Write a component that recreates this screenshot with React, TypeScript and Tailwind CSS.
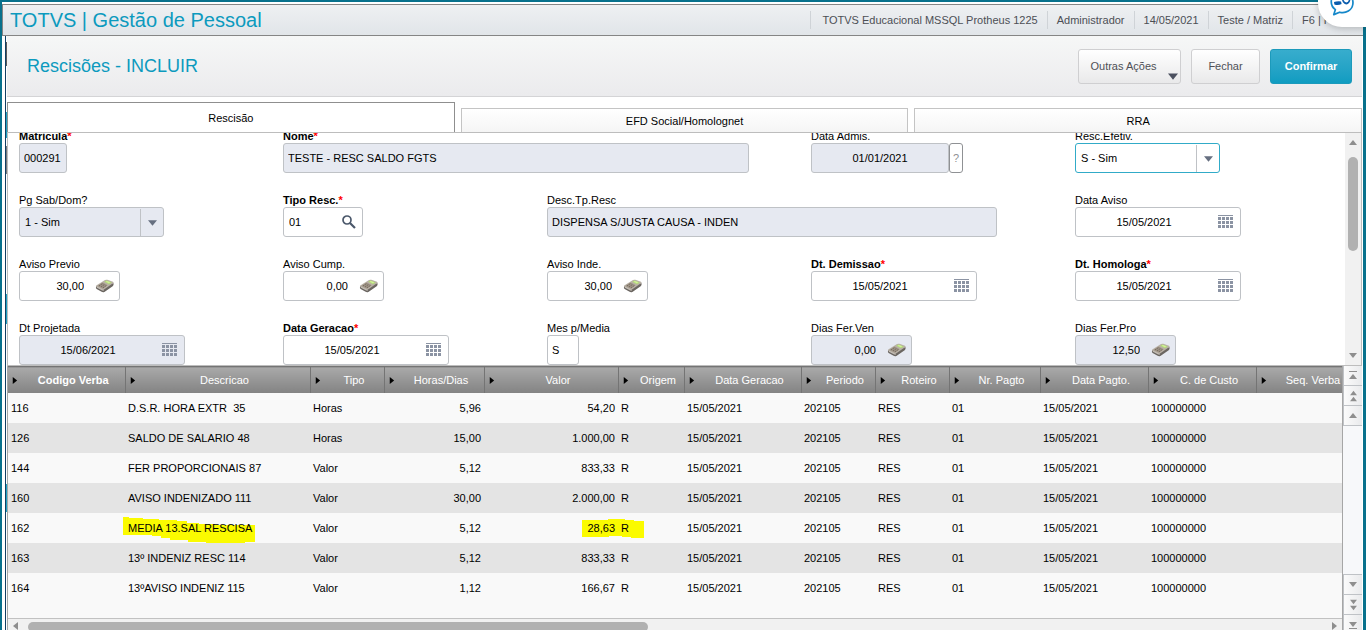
import React from "react";

type Kind = "text" | "num" | "date" | "select" | "lookup" | "help";

interface Field {
  id: string;
  label: string;
  required?: boolean;
  readOnly?: boolean;
  focused?: boolean;
  kind: Kind;
  value: string;
  width: string;
  span?: string;
}

const fields: Field[] = [
  { id: "matricula", label: "Matricula", required: true, readOnly: true, kind: "text", value: "000291", width: "w-12" },
  { id: "nome", label: "Nome", required: true, readOnly: true, kind: "text", value: "TESTE - RESC SALDO FGTS", width: "w-[466px]", span: "col-span-2" },
  { id: "admis", label: "Data Admis.", readOnly: true, kind: "help", value: "01/01/2021", width: "w-[138px]" },
  { id: "efetiv", label: "Resc.Efetiv.", focused: true, kind: "select", value: "S - Sim", width: "w-[145px]" },
  { id: "sabdom", label: "Pg Sab/Dom?", readOnly: true, kind: "select", value: "1 - Sim", width: "w-[145px]" },
  { id: "tipo", label: "Tipo Resc.", required: true, kind: "lookup", value: "01", width: "w-20" },
  { id: "desc", label: "Desc.Tp.Resc", readOnly: true, kind: "text", value: "DISPENSA S/JUSTA CAUSA - INDEN", width: "w-[450px]", span: "col-span-2" },
  { id: "aviso", label: "Data Aviso", kind: "date", value: "15/05/2021", width: "w-[166px]" },
  { id: "previo", label: "Aviso Previo", kind: "num", value: "30,00", width: "w-[101px]" },
  { id: "cump", label: "Aviso Cump.", kind: "num", value: "0,00", width: "w-[101px]" },
  { id: "inde", label: "Aviso Inde.", kind: "num", value: "30,00", width: "w-[101px]" },
  { id: "demissao", label: "Dt. Demissao", required: true, kind: "date", value: "15/05/2021", width: "w-[166px]" },
  { id: "homologa", label: "Dt. Homologa", required: true, kind: "date", value: "15/05/2021", width: "w-[166px]" },
  { id: "projetada", label: "Dt Projetada", readOnly: true, kind: "date", value: "15/06/2021", width: "w-[166px]" },
  { id: "geracao", label: "Data Geracao", required: true, kind: "date", value: "15/05/2021", width: "w-[166px]" },
  { id: "media", label: "Mes p/Media", kind: "text", value: "S", width: "w-8" },
  { id: "ferven", label: "Dias Fer.Ven", readOnly: true, kind: "num", value: "0,00", width: "w-[101px]" },
  { id: "ferpro", label: "Dias Fer.Pro", readOnly: true, kind: "num", value: "12,50", width: "w-[101px]" },
];

const columns = [
  { name: "Codigo Verba", width: "w-[117px]" },
  { name: "Descricao", width: "w-[185px]" },
  { name: "Tipo", width: "w-[74px]" },
  { name: "Horas/Dias", width: "w-[100px]" },
  { name: "Valor", width: "w-[134px]" },
  { name: "Origem", width: "w-[66px]" },
  { name: "Data Geracao", width: "w-[117px]" },
  { name: "Periodo", width: "w-[74px]" },
  { name: "Roteiro", width: "w-[74px]" },
  { name: "Nr. Pagto", width: "w-[91px]" },
  { name: "Data Pagto.", width: "w-[108px]" },
  { name: "C. de Custo", width: "w-[108px]" },
  { name: "Seq. Verba", width: "w-[100px]" },
];

const verbas = [
  ["116", "D.S.R. HORA EXTR  35", "Horas", "5,96", "54,20"],
  ["126", "SALDO DE SALARIO 48", "Horas", "15,00", "1.000,00"],
  ["144", "FER PROPORCIONAIS 87", "Valor", "5,12", "833,33"],
  ["160", "AVISO INDENIZADO 111", "Valor", "30,00", "2.000,00"],
  ["162", "MEDIA 13.SAL RESCISA", "Valor", "5,12", "28,63"],
  ["163", "13º INDENIZ RESC 114", "Valor", "5,12", "833,33"],
  ["164", "13ºAVISO INDENIZ 115", "Valor", "1,12", "166,67"],
];

const common = ["R", "15/05/2021", "202105", "RES", "01", "15/05/2021", "100000000", ""];

function CalculatorIcon() {
  return (
    <svg width="20" height="16" viewBox="0 0 20 16" className="shrink-0" aria-hidden="true">
      <path d="M1 8.2Q.6 10.4 1.6 11L6.6 13.8Q8 14.6 9.4 13.9L18 8Q19 7 18.4 4.8Z" fill="#6b6661" />
      <path d="M1.2 7.6 10 2Q11 1.4 12.4 1.8L18 3.8Q19 4.4 18 5.2L9 11.6Q8 12.2 7 11.8L1.6 9Q.8 8.4 1.2 7.6Z" fill="#b9b1a6" />
      <path d="M2.2 8 7.6 4.6 12.6 7.2 8 10.8Z" fill="#9c9184" />
      <path d="M9.2 3.7 11.4 2.5 16.8 4.4 14 6.2Z" fill="#b4dc78" />
      <path d="M10.8 3.7 12 3 15.4 4.3 13.8 5.3Z" fill="#d2f09a" />
      <path d="M4 7.8 8 5.3M6 8.8 10 6.2M8 9.8 12 7.1" stroke="#756a5e" strokeWidth=".9" strokeDasharray="1.4 .8" />
      <path d="M1.8 9.2 7.4 12.1Q8.2 12.5 9 12" fill="none" stroke="#ddd8d1" strokeWidth=".7" />
    </svg>
  );
}

function CalendarIcon() {
  const cells: React.ReactElement[] = [];
  for (let r = 0; r < 3; r++)
    for (let c = 0; c < 4; c++)
      cells.push(<rect key={`${r}-${c}`} x={c * 4} y={2 + r * 4} width="3" height="3" />);
  return (
    <svg width="15" height="14" viewBox="0 0 15 14" fill="#8b93a3" shapeRendering="crispEdges" className="shrink-0" aria-hidden="true">
      <rect width="15" height="1" />
      {cells}
    </svg>
  );
}

function SearchIcon() {
  return (
    <svg width="14" height="14" viewBox="0 0 14 14" fill="none" stroke="#4b586b" className="shrink-0" aria-hidden="true">
      <circle cx="5" cy="5" r="4" strokeWidth="1.7" />
      <path d="M8 8 13 13" strokeWidth="2.2" />
    </svg>
  );
}

type Dir = "up" | "down" | "left" | "right";
const trianglePaths: Record<Dir, string> = {
  up: "M0 6 4 1 8 6Z",
  down: "M0 1 8 1 4 6Z",
  left: "M6 0V8L1 4Z",
  right: "M2 0V8L7 4Z",
};

function Triangle({ dir, color = "#8e8e8e", size = 8 }: { dir: Dir; color?: string; size?: number }) {
  const flat = dir === "up" || dir === "down";
  return (
    <svg width={size} height={flat ? size - 1 : size} viewBox={flat ? "0 0 8 7" : "0 0 8 8"} className="shrink-0" aria-hidden="true">
      <path d={trianglePaths[dir]} fill={color} />
    </svg>
  );
}

function Control({ f }: { f: Field }) {
  const bg = f.readOnly ? "bg-[#e6e9f1]" : "bg-white";
  const border = f.focused ? "border-[#31abc8]" : "border-[#bfc2c6]";
  const box = `flex h-[30px] max-w-full items-center overflow-hidden rounded-[3px] border ${border} ${bg} ${f.width}`;
  const input = "h-full w-full min-w-0 bg-transparent outline-none";

  if (f.kind === "select")
    return (
      <div className={`relative ${box}`}>
        <select id={f.id} defaultValue={f.value} className={`${input} appearance-none pl-[5px]`}>
          <option>{f.value}</option>
        </select>
        <span className="pointer-events-none absolute right-0 bottom-0 top-px flex w-[23px] items-center justify-center border-l border-[#bfc2c6]">
          <Triangle dir="down" color="#666f80" size={9} />
        </span>
      </div>
    );
  if (f.kind === "date")
    return (
      <div className={`${box} pr-[7px]`}>
        <input id={f.id} defaultValue={f.value} readOnly={f.readOnly} className={`${input} text-center`} />
        <button type="button" aria-label={`Calendário ${f.label}`} className="ml-[6px]"><CalendarIcon /></button>
      </div>
    );
  if (f.kind === "num")
    return (
      <div className={`${box} pr-1`}>
        <input id={f.id} defaultValue={f.value} readOnly={f.readOnly} className={`${input} text-right`} />
        <button type="button" aria-label={`Calculadora ${f.label}`} className="ml-[11px]"><CalculatorIcon /></button>
      </div>
    );
  if (f.kind === "lookup")
    return (
      <div className={`${box} pr-[6px]`}>
        <input id={f.id} defaultValue={f.value} className={`${input} pl-[5px]`} />
        <button type="button" aria-label="Pesquisar"><SearchIcon /></button>
      </div>
    );
  if (f.kind === "help")
    return (
      <div className="flex">
        <div className={box}>
          <input id={f.id} defaultValue={f.value} readOnly className={`${input} text-center`} />
        </div>
        <button type="button" aria-label="Ajuda" className="h-[30px] w-[14px] rounded-[3px] border border-[#8f9194] bg-white text-[#8f9194]">?</button>
      </div>
    );
  return (
    <div className={box}>
      <input id={f.id} defaultValue={f.value} readOnly={f.readOnly} className={`${input} pl-1`} />
    </div>
  );
}

function FormPanel() {
  return (
    <section className="flex h-[233px] shrink-0 border-x border-b border-[#bdbdbd] bg-white">
      <div className="min-w-0 flex-1 overflow-hidden pr-[6px] pl-[11px]">
        <div className="-mt-1 grid grid-cols-5">
          {fields.map((f) => (
            <div key={f.id} className={`flex h-16 min-w-0 flex-col items-start ${f.span ?? ""}`}>
              <label htmlFor={f.id} className={`h-[14px] leading-[14px] whitespace-nowrap ${f.required ? "font-bold" : ""}`}>
                {f.label}
                {f.required && <span className="text-[#ff0000]">*</span>}
              </label>
              <Control f={f} />
            </div>
          ))}
        </div>
      </div>
      <div className="flex w-4 shrink-0 flex-col items-center bg-[#f1f1f1] py-[6px]">
        <Triangle dir="up" />
        <div className="mt-[11px] h-[94px] w-[10px] rounded-full bg-[#b1b1b1]" />
        <div className="mt-auto"><Triangle dir="down" /></div>
      </div>
    </section>
  );
}

function Highlight({ wide }: { wide?: boolean }) {
  return wide ? (
    <svg width="132" height="27" viewBox="0 0 132 27" className="pointer-events-none absolute -top-1 -left-[5px]" aria-hidden="true">
      <path d="M0 0H6V1H20V2H36V3H54V4H64V6H76V7H92V8H132V25H122V26H83V25H65V23H47V21H38V19H29V18H0Z" fill="#fbfb00" />
    </svg>
  ) : (
    <svg width="62" height="19" viewBox="0 0 62 19" className="pointer-events-none absolute -top-[2px] -right-[29px]" aria-hidden="true">
      <path d="M0 1H26V0H43V1H52V2H62V19H49V18H40V17H27V18H0Z" fill="#fbfb00" />
    </svg>
  );
}

function VerbasTable() {
  return (
    <div className="min-h-0 min-w-0 flex-1 overflow-hidden">
      <table className="w-[1348px] table-fixed border-collapse">
        <colgroup>
          {columns.map((c) => <col key={c.name} className={c.width} />)}
        </colgroup>
        <thead>
          <tr className="h-[26px]">
            {columns.map((c, i) => (
              <th
                key={c.name}
                className={`border-t border-r border-t-[#747474] border-r-[#747474] bg-linear-to-b from-[#a9a9a9] to-[#838383] p-0 text-white ${i === 0 ? "font-bold" : "border-l border-l-[#c2c2c2] font-normal"}`}
              >
                <span className="flex items-center whitespace-nowrap">
                  <span className="w-[14px] shrink-0 pt-[2px] pl-[3px]"><Triangle dir="right" color="#000000" size={7} /></span>
                  <span className="flex-1 text-center">{c.name}</span>
                </span>
              </th>
            ))}
          </tr>
        </thead>
        <tbody>
          {verbas.map((v, r) => (
            <tr key={v[0]} className={`h-[30px] ${r % 2 ? "bg-[#e4e4e4]" : "bg-[#f9f9f9]"}`}>
              {[...v, ...common].map((cell, i) => (
                <td key={i} className={`p-0 pr-[3px] pl-[3px] whitespace-pre ${i === 3 || i === 4 ? "text-right" : ""}`}>
                  <span className="relative inline-block">
                    {r === 4 && i === 1 && <Highlight wide />}
                    {r === 4 && i === 4 && <Highlight />}
                    <span className="relative">{cell}</span>
                  </span>
                </td>
              ))}
            </tr>
          ))}
        </tbody>
      </table>
    </div>
  );
}

function NavButton({ label, children }: { label: string; children: React.ReactNode }) {
  return (
    <button type="button" aria-label={label} className="flex h-5 w-full shrink-0 flex-col items-center justify-center border-b border-l border-[#bfc2c6] bg-linear-to-r from-[#fbfbfb] to-[#e9eaec]">
      {children}
    </button>
  );
}

function GridNavigator() {
  return (
    <nav className="flex w-[19px] shrink-0 flex-col bg-[#f7f8fa]" aria-label="Navegação">
      <NavButton label="Primeiro"><span className="mb-px h-px w-2 bg-[#8e8e8e]" /><Triangle dir="up" /></NavButton>
      <NavButton label="Página anterior"><Triangle dir="up" size={7} /><Triangle dir="up" size={7} /></NavButton>
      <NavButton label="Anterior"><Triangle dir="up" /></NavButton>
      <div className="h-[149px] shrink-0 border-b border-[#bfc2c6]" />
      <NavButton label="Próximo"><Triangle dir="down" /></NavButton>
      <NavButton label="Próxima página"><Triangle dir="down" size={7} /><Triangle dir="down" size={7} /></NavButton>
      <NavButton label="Último"><Triangle dir="down" /><span className="h-px w-2 bg-[#8e8e8e]" /></NavButton>
    </nav>
  );
}

function ChatWidget() {
  return (
    <button type="button" aria-label="Chat" className="absolute top-0 right-0 flex h-[27px] w-12 items-start justify-center overflow-hidden rounded-bl-[24px] bg-white shadow-[0_2px_6px_rgba(0,0,0,0.2)]">
      <svg width="26" height="18" viewBox="0 0 26 18" aria-hidden="true">
        <path d="M2.4 0C1.8 4 3.4 7.5 6.4 9.6L4.8 14.6 10.6 12.2C17 14 23 10 23.8 4.5Q24.2 2 23.6 0" fill="none" stroke="#1688c9" strokeWidth="1.7" strokeLinejoin="round" />
        <path d="M5 2Q8 1 12 1.4L12.6 4Q9 5.6 5.4 4.4Z" fill="#0a5cad" />
        <path d="M13 0Q14 4 17.4 4.4Q20.6 4 21.4 0Z" fill="#0a5cad" />
        <path d="M14.6 0Q15.4 2.4 17.4 2.6Q19.4 2.4 19.8 0Z" fill="#ffffff" />
      </svg>
    </button>
  );
}

function EdgeStrip() {
  return (
    <div className="flex w-[2px] shrink-0 flex-col border-l border-[#123f63] pt-[6px]" aria-hidden="true">
      <div className="h-6 shrink-0 bg-[#5a5a5a]" />
      <div className="mt-[46px] h-[26px] shrink-0 bg-[#1fa3c4]" />
      <div className="mt-2 h-7 shrink-0 bg-[#77797c]" />
      <div className="mt-[120px] h-[30px] shrink-0 bg-[#1fa3c4]" />
      <div className="mt-[160px] h-7 shrink-0 bg-[#1fa3c4]" />
    </div>
  );
}

export default function App() {
  const status = ["TOTVS Educacional MSSQL Protheus 1225", "Administrador", "14/05/2021", "Teste / Matriz"];
  return (
    <div className="relative h-screen overflow-hidden font-['Liberation_Sans',Arial,sans-serif] text-[11px] leading-[14px] text-black">
      <div className="flex h-full flex-col border-t-2 border-r-[3px] border-l-2 border-[#08718c] bg-white pt-[2px]">
        <header className="flex h-8 shrink-0 items-center justify-between border-y border-l border-[#858585] bg-linear-to-b from-[#eef0f2] to-[#e1e5e9] pl-[7px] text-[#4c4f55]">
          <h1 className="text-[20px] leading-6 text-[#0c9abe]">TOTVS | Gestão de Pessoal</h1>
          <div className="flex items-center">
            {status.map((s) => (
              <span key={s} className="border-l border-[#cfd3d7] pr-[9px] pl-[9px] leading-[18px] whitespace-nowrap first:pl-[11px]">{s}</span>
            ))}
            <span className="w-[71px] overflow-hidden border-l border-[#cfd3d7] pl-[9px] leading-[18px] whitespace-nowrap">F6 | Protheus</span>
          </div>
        </header>

        <div className="flex min-h-0 flex-1 pl-[3px]">
          <EdgeStrip />
          <main className="flex min-w-0 flex-1 flex-col pr-px">
            <div className="flex h-[61px] shrink-0 items-center justify-between border-b border-[#d4d4d6] bg-linear-to-b from-[#f6f7f7] to-[#ebebed] pr-[10px] pl-5">
              <h2 className="text-[18px] leading-6 text-[#0c9abe]">Rescisões - INCLUIR</h2>
              <div className="flex gap-[10px] text-[#4f5056]">
                <button type="button" className="relative h-[35px] w-[103px] rounded-[3px] border border-[#cfcfd1] bg-linear-to-b from-white to-[#e9e9ea] pr-3">
                  Outras Ações
                  <span className="absolute right-[2px] bottom-[2px]"><Triangle dir="down" color="#4c5160" size={10} /></span>
                </button>
                <button type="button" className="h-[35px] w-[69px] rounded-[3px] border border-[#cfcfd1] bg-linear-to-b from-white to-[#e9e9ea]">Fechar</button>
                <button type="button" className="h-[35px] w-[82px] rounded-[3px] border border-[#1c9abb] bg-linear-to-b from-[#37adcd] to-[#0f9cc1] font-bold text-white">Confirmar</button>
              </div>
            </div>

            <div className="mt-[5px] flex h-[31px] shrink-0 items-end gap-[6px] border-b border-[#bdbdbd]" role="tablist">
              <button type="button" role="tab" aria-selected="true" className="h-[30px] flex-1 border-x border-t border-[#8f8f8f] bg-white">Rescisão</button>
              <button type="button" role="tab" aria-selected="false" className="h-6 flex-1 border-x border-t border-[#c4c4c4] bg-linear-to-b from-white to-[#f5f5f5]">EFD Social/Homolognet</button>
              <button type="button" role="tab" aria-selected="false" className="h-6 flex-1 border-x border-t border-[#c4c4c4] bg-linear-to-b from-white to-[#f5f5f5]">RRA</button>
            </div>

            <FormPanel />
            <div className="flex min-h-0 flex-1 border-l border-[#a6a6a6]">
              <div className="flex min-w-0 flex-1 flex-col border-r border-[#a6a6a6] bg-[#f9f9f9]">
                <VerbasTable />
                <div className="flex h-3 shrink-0 items-start overflow-hidden border-t border-[#c2c2c2] bg-[#f1f1f1] px-1 pt-[3px]">
                  <Triangle dir="left" />
                  <div className="ml-2 h-[10px] w-[620px] rounded-full bg-[#b1b1b1]" />
                  <div className="ml-auto"><Triangle dir="right" /></div>
                </div>
              </div>
              <GridNavigator />
            </div>
          </main>
        </div>
      </div>
      <ChatWidget />
    </div>
  );
}
